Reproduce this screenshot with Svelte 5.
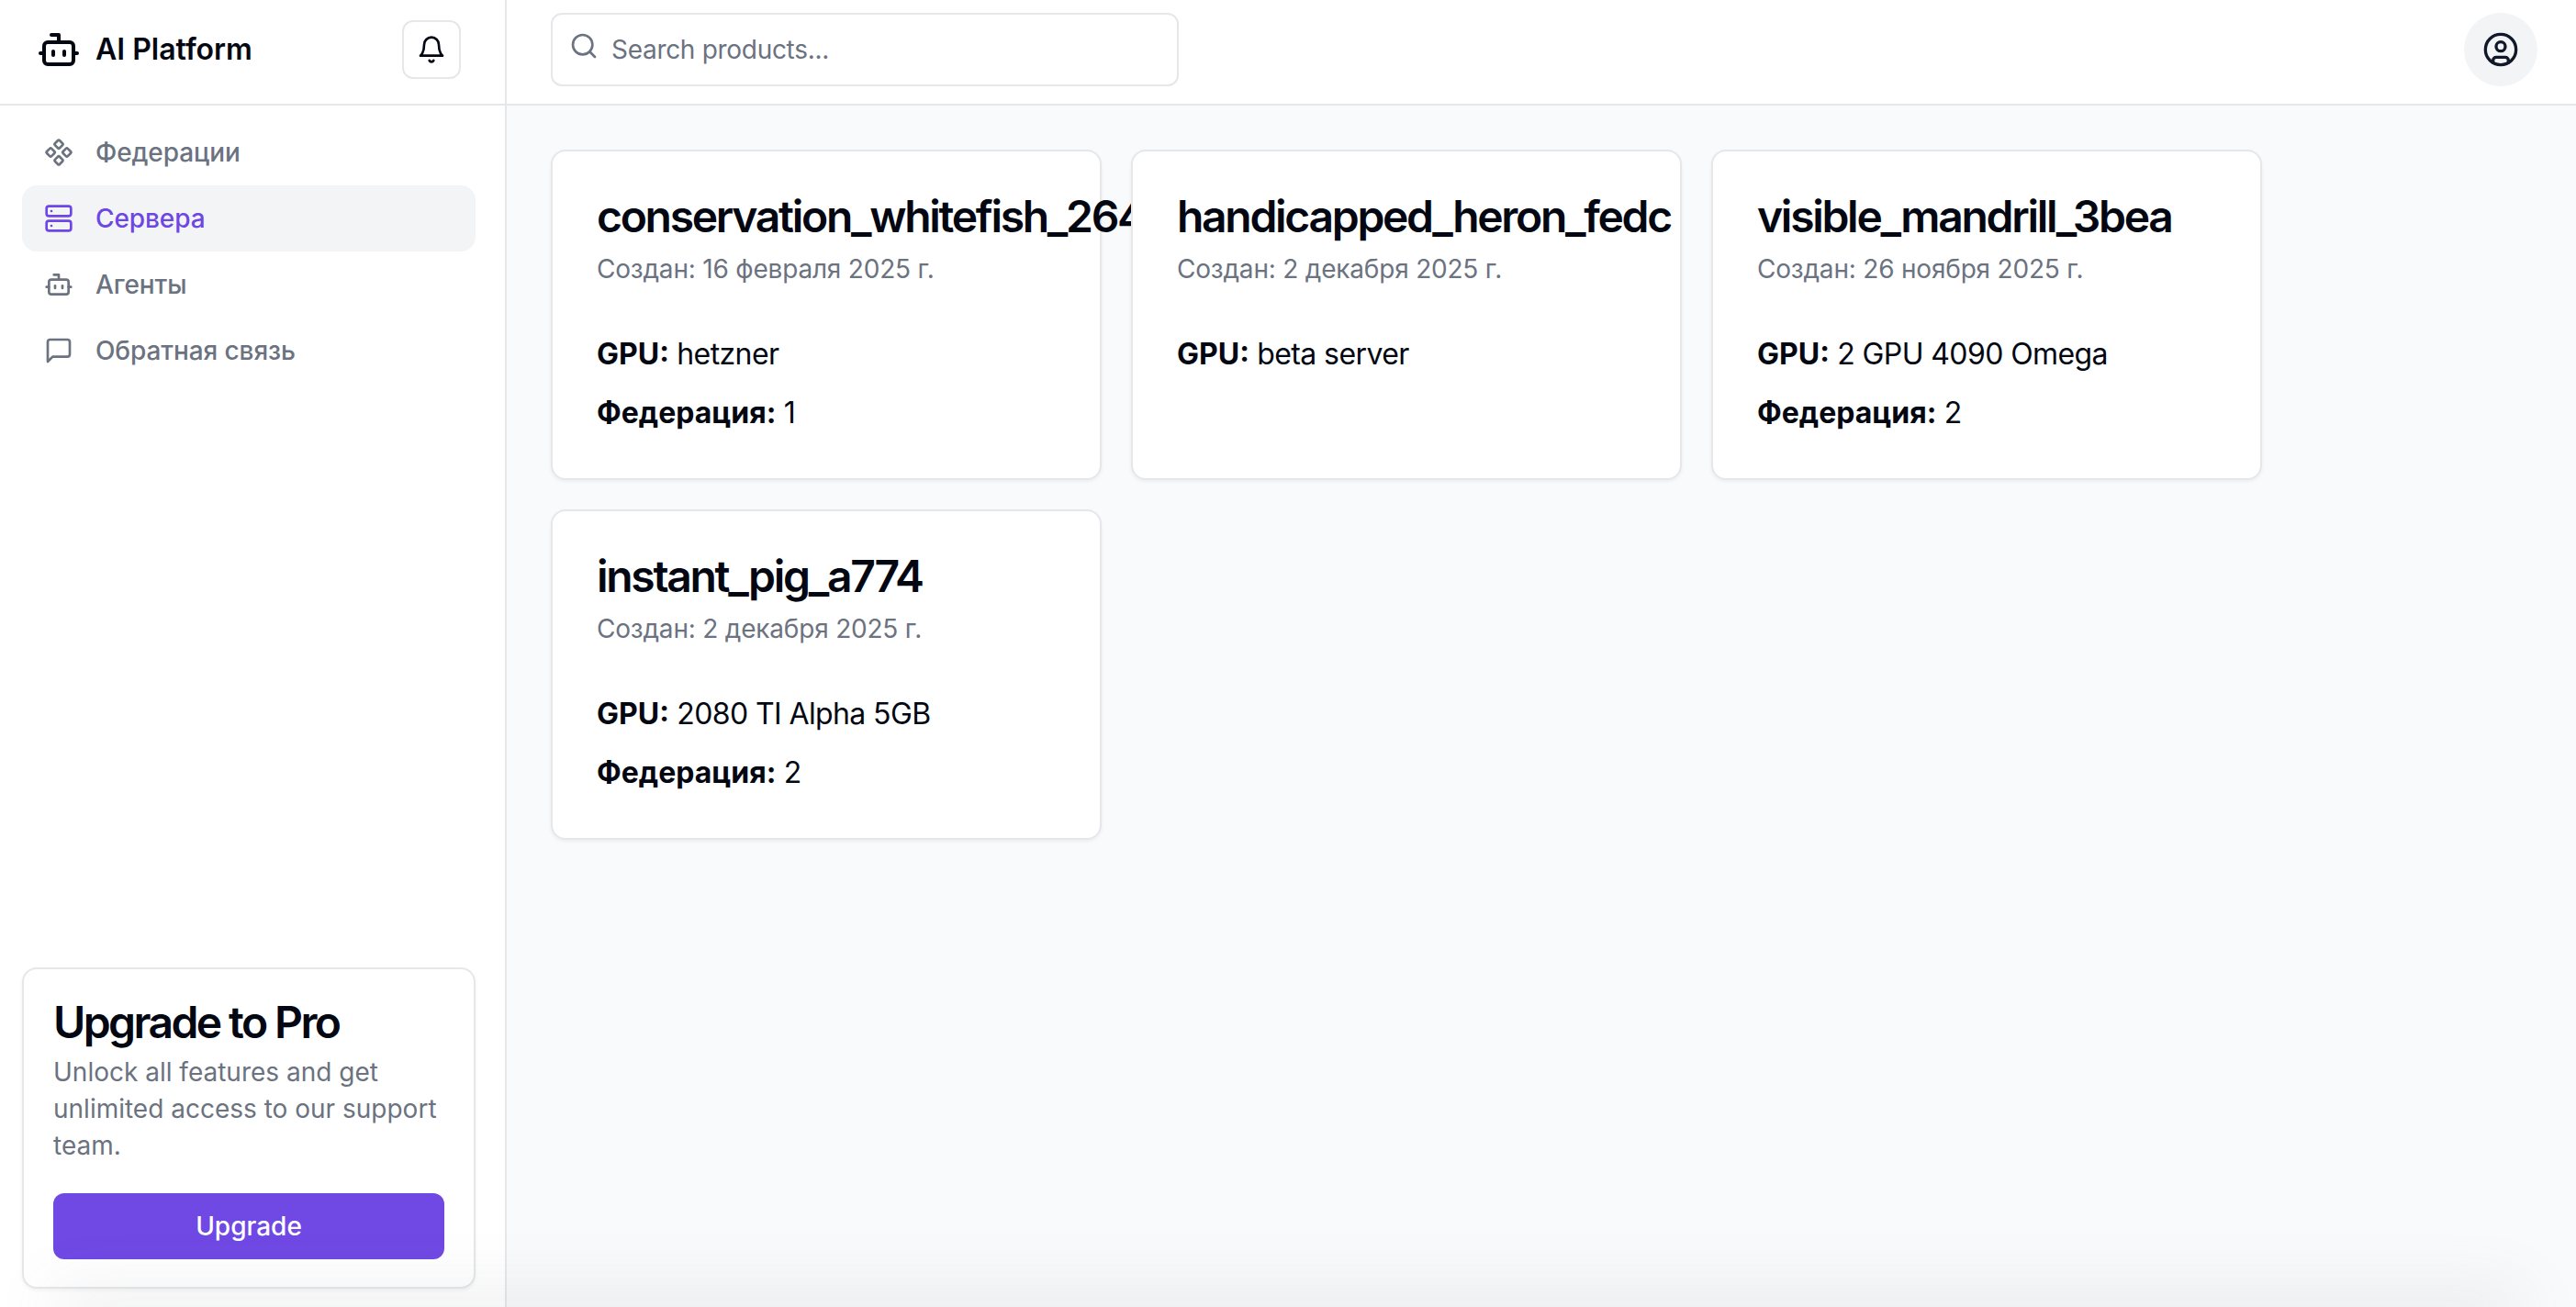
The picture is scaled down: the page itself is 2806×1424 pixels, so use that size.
<script>
	const nav = [
		{ label: 'Федерации', icon: 'component' },
		{ label: 'Сервера', icon: 'server', active: true },
		{ label: 'Агенты', icon: 'bot' },
		{ label: 'Обратная связь', icon: 'message' }
	];

	const servers = [
		{ name: 'conservation_whitefish_2647', created: '16 февраля 2025 г.', gpu: 'hetzner', federation: '1' },
		{ name: 'handicapped_heron_fedc', created: '2 декабря 2025 г.', gpu: 'beta server' },
		{ name: 'visible_mandrill_3bea', created: '26 ноября 2025 г.', gpu: '2 GPU 4090 Omega', federation: '2' },
		{ name: 'instant_pig_a774', created: '2 декабря 2025 г.', gpu: '2080 TI Alpha 5GB', federation: '2' }
	];
</script>

{#snippet botIcon()}
	<path d="M12 8V4H8" />
	<rect width="16" height="12" x="4" y="8" rx="2" />
	<path d="M2 14h2" />
	<path d="M20 14h2" />
	<path d="M15 13v2" />
	<path d="M9 13v2" />
{/snippet}

{#snippet navIcon(name)}
	<svg class="icon" viewBox="0 0 24 24">
		{#if name === 'component'}
			<path d="M15.536 11.293a1 1 0 0 0 0 1.414l2.376 2.377a1 1 0 0 0 1.414 0l2.377-2.377a1 1 0 0 0 0-1.414l-2.377-2.377a1 1 0 0 0-1.414 0z" />
			<path d="M2.297 11.293a1 1 0 0 0 0 1.414l2.377 2.377a1 1 0 0 0 1.414 0l2.377-2.377a1 1 0 0 0 0-1.414L6.088 8.916a1 1 0 0 0-1.414 0z" />
			<path d="M8.916 17.912a1 1 0 0 0 0 1.415l2.377 2.376a1 1 0 0 0 1.414 0l2.377-2.376a1 1 0 0 0 0-1.415l-2.377-2.376a1 1 0 0 0-1.414 0z" />
			<path d="M8.916 4.674a1 1 0 0 0 0 1.414l2.377 2.376a1 1 0 0 0 1.414 0l2.377-2.376a1 1 0 0 0 0-1.414l-2.377-2.377a1 1 0 0 0-1.414 0z" />
		{:else if name === 'server'}
			<rect width="20" height="8" x="2" y="2" rx="2" />
			<rect width="20" height="8" x="2" y="14" rx="2" />
			<path d="M6 6h.01" />
			<path d="M6 18h.01" />
		{:else if name === 'bot'}
			{@render botIcon()}
		{:else}
			<path d="M21 15a2 2 0 0 1-2 2H7l-4 4V5a2 2 0 0 1 2-2h14a2 2 0 0 1 2 2z" />
		{/if}
	</svg>
{/snippet}

<div class="layout">
	<aside class="sidebar">
		<div class="brand">
			<svg class="icon logo" viewBox="0 0 24 24">{@render botIcon()}</svg>
			<span class="brand-name">AI Platform</span>
			<button class="bell" aria-label="Notifications">
				<svg class="icon" viewBox="0 0 24 24">
					<path d="M6 8a6 6 0 0 1 12 0c0 7 3 9 3 9H3s3-2 3-9" />
					<path d="M10.3 21a1.94 1.94 0 0 0 3.4 0" />
				</svg>
			</button>
		</div>

		<nav class="nav">
			{#each nav as item}
				<a href="#top" class="nav-item" class:active={item.active}>
					{@render navIcon(item.icon)}
					<span>{item.label}</span>
				</a>
			{/each}
		</nav>

		<div class="upgrade">
			<h3>Upgrade to Pro</h3>
			<p>Unlock all features and get unlimited access to our support team.</p>
			<button class="upgrade-btn">Upgrade</button>
		</div>
	</aside>

	<div class="content">
		<header class="topbar">
			<label class="search">
				<svg class="icon" viewBox="0 0 24 24">
					<path d="m21 21-4.3-4.3" />
					<circle cx="11" cy="11" r="8" />
				</svg>
				<input type="text" placeholder="Search products..." />
			</label>
			<button class="avatar" aria-label="Account">
				<svg class="icon" viewBox="0 0 24 24">
					<circle cx="12" cy="12" r="10" />
					<circle cx="12" cy="10" r="3" />
					<path d="M7 20.662V19a2 2 0 0 1 2-2h6a2 2 0 0 1 2 2v1.662" />
				</svg>
			</button>
		</header>

		<main class="grid">
			{#each servers as server}
				<article class="card">
					<h2>{server.name}</h2>
					<p class="created">Создан: {server.created}</p>
					<div class="specs">
						<p><strong>GPU:</strong> {server.gpu}</p>
						{#if server.federation}
							<p><strong>Федерация:</strong> {server.federation}</p>
						{/if}
					</div>
				</article>
			{/each}
		</main>
	</div>

	<div class="bottom-fade"></div>
</div>

<style>
	:global(body) {
		margin: 0;
		background: #f9fafb;
		font-family: Inter, "Liberation Sans", sans-serif;
		color: #030712;
	}
	.layout {
		position: relative;
		display: flex;
		height: 1424px;
		overflow: hidden;
	}
	.icon {
		display: block;
		width: 32px;
		height: 32px;
		flex: none;
		fill: none;
		stroke: currentColor;
		stroke-width: 2;
		stroke-linecap: round;
		stroke-linejoin: round;
	}

	/* Sidebar */
	.sidebar {
		display: flex;
		flex-direction: column;
		flex: none;
		box-sizing: border-box;
		width: 552px;
		height: 100%;
		background: #fff;
		border-right: 2px solid #e5e7eb;
	}
	.brand {
		display: flex;
		align-items: center;
		gap: 16px;
		box-sizing: border-box;
		height: 115px;
		padding: 0 48px 6px 40px;
		border-bottom: 2px solid #e5e7eb;
	}
	.icon.logo {
		width: 48px;
		height: 48px;
	}
	.brand-name {
		flex: 1;
		font-size: 32px;
		font-weight: 600;
	}
	.bell {
		display: flex;
		align-items: center;
		justify-content: center;
		box-sizing: border-box;
		width: 64px;
		height: 64px;
		padding: 0;
		color: #030712;
		background: #fff;
		border: 2px solid #e5e7eb;
		border-radius: 12px;
	}
	.nav {
		display: flex;
		flex-direction: column;
		padding: 15px 32px 0 24px;
	}
	.nav-item {
		display: flex;
		align-items: center;
		gap: 24px;
		height: 72px;
		padding: 0 24px;
		box-sizing: border-box;
		font-size: 28px;
		font-weight: 500;
		letter-spacing: -0.1px;
		color: #6b7280;
		text-decoration: none;
		border-radius: 16px;
	}
	.nav-item.active {
		color: #6d46e4;
		background: #f3f4f6;
	}
	.upgrade {
		margin: auto 32px 20px 24px;
		padding: 30px 32px;
		background: #fff;
		border: 2px solid #e5e7eb;
		border-radius: 16px;
		box-shadow: 0 2px 4px rgba(0, 0, 0, 0.05);
	}
	.upgrade h3 {
		margin: 0;
		font-size: 48px;
		line-height: 56px;
		font-weight: 600;
		letter-spacing: -2.6px;
	}
	.upgrade p {
		margin: 6px 0 32px;
		font-size: 28px;
		line-height: 40px;
		color: #6b7280;
	}
	.upgrade-btn {
		display: block;
		width: 100%;
		height: 72px;
		padding: 0;
		font: 500 28px Inter, "Liberation Sans", sans-serif;
		color: #fff;
		background: #7048e4;
		border: none;
		border-radius: 12px;
	}

	/* Main area */
	.content {
		flex: 1;
		min-width: 0;
	}
	.topbar {
		display: flex;
		align-items: center;
		justify-content: space-between;
		box-sizing: border-box;
		height: 115px;
		padding: 0 42px 6px 48px;
		background: #fff;
		border-bottom: 2px solid #e5e7eb;
	}
	.search {
		display: flex;
		gap: 14px;
		box-sizing: border-box;
		width: 684px;
		height: 80px;
		padding: 18px 18px 0;
		color: #6b7280;
		background: #fff;
		border: 2px solid #e5e7eb;
		border-radius: 12px;
	}
	.search input {
		flex: 1;
		min-width: 0;
		height: 40px;
		padding: 0;
		font: 400 28px Inter, "Liberation Sans", sans-serif;
		letter-spacing: -0.3px;
		color: #030712;
		background: none;
		border: none;
		outline: none;
	}
	.search input::placeholder {
		color: #6b7280;
		opacity: 1;
	}
	.avatar {
		display: flex;
		align-items: center;
		justify-content: center;
		width: 80px;
		height: 80px;
		padding: 0;
		color: #111827;
		background: #f3f4f6;
		border: none;
		border-radius: 50%;
	}
	.avatar .icon {
		width: 40px;
		height: 40px;
	}
	.grid {
		display: grid;
		grid-template-columns: repeat(auto-fill, 600px);
		gap: 32px;
		padding: 48px;
	}
	.card {
		box-sizing: border-box;
		height: 360px;
		padding: 45px 48px 48px;
		background: #fff;
		border: 2px solid #e5e7eb;
		border-radius: 16px;
		box-shadow: 0 2px 4px rgba(0, 0, 0, 0.05);
	}
	.card h2 {
		margin: 0;
		font-size: 48px;
		line-height: 52px;
		font-weight: 600;
		letter-spacing: -2.3px;
		white-space: nowrap;
	}
	.created {
		margin: 11px 0 0;
		font-size: 28px;
		line-height: 40px;
		letter-spacing: -0.2px;
		color: #6b7280;
	}
	.specs {
		margin-top: 49px;
		font-size: 32px;
		line-height: 48px;
		letter-spacing: -0.6px;
	}
	.specs p {
		margin: 0 0 16px;
	}
	.specs strong {
		font-weight: 700;
		letter-spacing: 0;
	}

	/* Soft shade along the bottom edge of the window */
	.bottom-fade {
		position: absolute;
		left: 70px;
		right: 70px;
		bottom: -10px;
		height: 10px;
		box-shadow: 0 0 70px 8px rgba(110, 112, 125, 0.22);
		pointer-events: none;
	}
</style>
